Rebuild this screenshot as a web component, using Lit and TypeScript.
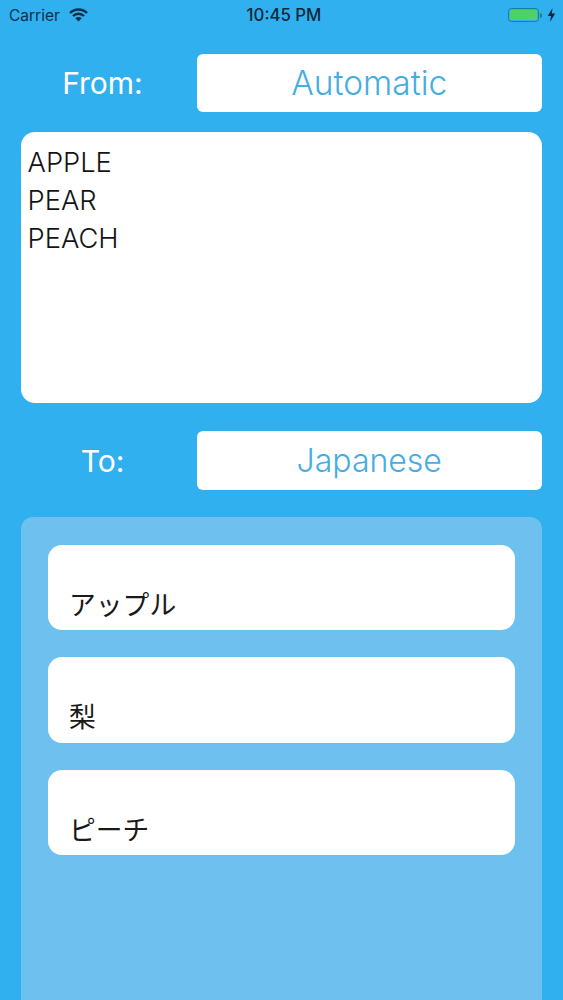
import { LitElement, html, css } from "lit";
import { customElement } from "lit/decorators.js";

@customElement("app-root")
export class AppRoot extends LitElement {
  static styles = css`
    :host {
      display: block;
      width: 563px;
      height: 1000px;
      overflow: hidden;
      background: #31b0ef;
      font-family: Inter, "Liberation Sans", "Noto Sans CJK JP", sans-serif;
    }
    .status {
      height: 30px;
      display: grid;
      grid-template-columns: 1fr auto 1fr;
      align-items: center;
      padding: 0 7px 0 9px;
      color: #0d2f4a;
      font-size: 15.5px;
    }
    .left { display: flex; align-items: center; gap: 9px; }
    .time { font-weight: 500; font-size: 16.8px; color: #10283c; margin-left: 3px; }
    .right { display: flex; justify-content: flex-end; align-items: center; gap: 5px; }
    .batt {
      width: 27px; height: 10px; border: 1.5px solid #1a7f9f; border-radius: 3.5px;
      padding: 1px; box-sizing: content-box; display: flex;
    }
    .batt i { flex: 1; background: #4fd166; border-radius: 1px; }
    .nub { width: 2px; height: 5px; background: #1a7f9f; border-radius: 0 2px 2px 0; margin-left: -4px; }
    .main {
      padding: 24px 21px 0 20.5px;
      display: flex;
      flex-direction: column;
    }
    .row {
      display: grid;
      grid-template-columns: 164px 1fr;
      gap: 12px;
      align-items: center;
    }
    .label {
      color: #fff;
      font-size: 30px;
      text-align: center;
      font-weight: 400;
    }
    .pick {
      height: 58px;
      background: #fff;
      border-radius: 6px;
      display: flex;
      align-items: center;
      justify-content: center;
      color: #45ade2;
      font-size: 33.5px;
      font-weight: 300;
    }
    .to { height: 59px; font-size: 32px; }
    .input {
      margin: 20px 0 28px;
      height: 271px;
      background: #fff;
      border-radius: 14px;
      padding: 11.5px 7px;
      box-sizing: border-box;
      color: #141414;
      font-size: 27.3px;
      line-height: 38px;
      font-weight: 350;
    }
    .output {
      margin-top: 27px;
      height: 500px;
      background: #6ec0ef;
      border-radius: 12px 12px 0 0;
      padding: 27.5px 27px;
      box-sizing: border-box;
      display: flex;
      flex-direction: column;
      gap: 27px;
    }
    .card {
      height: 85.6px;
      background: #fff;
      border-radius: 14px;
      padding: 0 21.5px 7.5px;
      box-sizing: border-box;
      display: flex;
      align-items: flex-end;
      color: #1a1a1a;
      font-size: 26.8px;
      line-height: 38px;
      font-weight: 400;
      font-family: "Noto Sans CJK JP", sans-serif;
    }
  `;

  render() {
    return html`
      <div class="status">
        <div class="left">
          <span>Carrier</span>
          <svg width="19" height="14" viewBox="0 0 19 14" aria-hidden="true">
            <path d="M1 5 A12 12 0 0 1 18 5" fill="none" stroke="#0d2f4a" stroke-width="2.4" />
            <path d="M4 8 A8 8 0 0 1 15 8" fill="none" stroke="#0d2f4a" stroke-width="2.4" />
            <path d="M9.5 13.5 L6.3 10.3 A4.6 4.6 0 0 1 12.7 10.3 Z" fill="#0d2f4a" />
          </svg>
        </div>
        <span class="time">10:45 PM</span>
        <div class="right">
          <span class="batt"><i></i></span>
          <span class="nub"></span>
          <svg width="9" height="14" viewBox="0 0 9 14" aria-hidden="true">
            <path d="M5.5 0 L0.8 8 H4 L3 14 L8.2 5.6 H4.8 Z" fill="#10283c" />
          </svg>
        </div>
      </div>
      <div class="main">
        <div class="row"><div class="label">From:</div><div class="pick">Automatic</div></div>
        <div class="input">APPLE<br />PEAR<br />PEACH</div>
        <div class="row"><div class="label">To:</div><div class="pick to">Japanese</div></div>
        <div class="output">
          <div class="card">アップル</div>
          <div class="card">梨</div>
          <div class="card">ピーチ</div>
        </div>
      </div>
    `;
  }
}
